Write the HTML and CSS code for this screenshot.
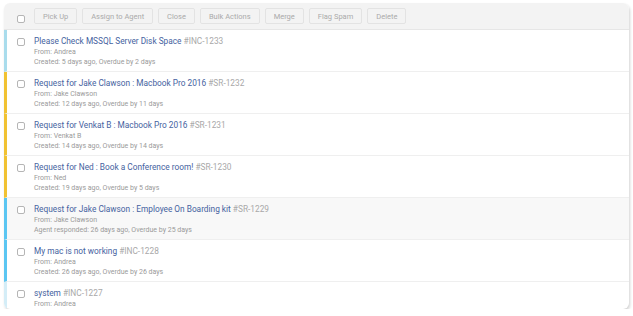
FILE: index.html
```html
<!DOCTYPE html>
<html lang="en">
<head>
  <meta charset="UTF-8">
  <title>Tickets</title>
  <link rel="stylesheet" href="styles.css">
</head>
<body>
  <div class="card">
    <div class="toolbar">
      <span class="check"></span>
      <div class="actions">
        <button>Pick Up</button>
        <button>Assign to Agent</button>
        <button>Close</button>
        <button>Bulk Actions</button>
        <button>Merge</button>
        <button>Flag Spam</button>
        <button>Delete</button>
      </div>
    </div>

    <div class="ticket pale">
      <span class="check"></span>
      <div class="info">
        <div class="title">Please Check MSSQL Server Disk Space <span class="id">#INC-1233</span></div>
        <div class="meta">From: Andrea</div>
        <div class="meta">Created: 5 days ago, Overdue by 2 days</div>
      </div>
    </div>
    <div class="ticket warn">
      <span class="check"></span>
      <div class="info">
        <div class="title">Request for Jake Clawson : Macbook Pro 2016 <span class="id">#SR-1232</span></div>
        <div class="meta">From: Jake Clawson</div>
        <div class="meta">Created: 12 days ago, Overdue by 11 days</div>
      </div>
    </div>
    <div class="ticket warn">
      <span class="check"></span>
      <div class="info">
        <div class="title">Request for Venkat B : Macbook Pro 2016 <span class="id">#SR-1231</span></div>
        <div class="meta">From: Venkat B</div>
        <div class="meta">Created: 14 days ago, Overdue by 14 days</div>
      </div>
    </div>
    <div class="ticket warn">
      <span class="check"></span>
      <div class="info">
        <div class="title">Request for Ned : Book a Conference room! <span class="id">#SR-1230</span></div>
        <div class="meta">From: Ned</div>
        <div class="meta">Created: 19 days ago, Overdue by 5 days</div>
      </div>
    </div>
    <div class="ticket blue shaded">
      <span class="check"></span>
      <div class="info">
        <div class="title">Request for Jake Clawson : Employee On Boarding kit <span class="id">#SR-1229</span></div>
        <div class="meta">From: Jake Clawson</div>
        <div class="meta">Agent responded: 26 days ago, Overdue by 25 days</div>
      </div>
    </div>
    <div class="ticket blue">
      <span class="check"></span>
      <div class="info">
        <div class="title">My mac is not working <span class="id">#INC-1228</span></div>
        <div class="meta">From: Andrea</div>
        <div class="meta">Created: 26 days ago, Overdue by 26 days</div>
      </div>
    </div>
    <div class="ticket light">
      <span class="check"></span>
      <div class="info">
        <div class="title">system <span class="id">#INC-1227</span></div>
        <div class="meta">From: Andrea</div>
      </div>
    </div>
  </div>
</body>
</html>
```

FILE: styles.css
```css
body { background:white; margin:0; padding:3px 4px 0 4px; font-family:Roboto, "Liberation Sans", sans-serif; }
.card {
  height: 306px;
  width: 625px;
  overflow: hidden;
  background: white;
  border-radius: 6px;
  box-shadow: 1px 2px 3px rgba(0, 0, 0, 0.18);
}
.toolbar {
  height: 26px;
  display: flex;
  align-items: center;
  background: #f3f3f3;
  border-bottom: 1px solid #e6e6e6;
  padding-left: 13px;
}
.check {
  width: 6px;
  height: 6px;
  border: 1px solid #b5b5b5;
  border-radius: 2px;
  background: white;
  flex-shrink: 0;
}
.toolbar .check { margin-top: 5px; }
.actions { display: flex; gap: 5px; margin-left: 9px; }
.actions button {
  font-family: inherit;
  font-size: 7.5px;
  color: #aaa;
  background: #f3f3f3;
  border: 1px solid #e3e3e3;
  border-radius: 2px;
  height: 16px;
  padding: 0 8px;
}
.ticket {
  height: 42px;
  display: flex;
  align-items: flex-start;
  border-bottom: 1px solid #efefef;
  border-left: 3px solid transparent;
  padding-left: 10px;
  box-sizing: border-box;
}
.ticket .check { margin-top: 8px; }
.ticket.pale { border-left-color: #a9dcec; }
.ticket.warn { border-left-color: #f1c232; }
.ticket.blue { border-left-color: #5bc6f2; }
.ticket.light { border-left-color: #d4edf7; }
.ticket.shaded { background: #f8f8f8; }
.info { margin-left: 9px; padding-top: 5px; }
.title { font-size: 8.3px; color: #4562a0; line-height: 12px; }
.id { color: #a8a8a8; }
.meta { font-size: 7px; color: #9a9a9a; line-height: 10px; }
```
